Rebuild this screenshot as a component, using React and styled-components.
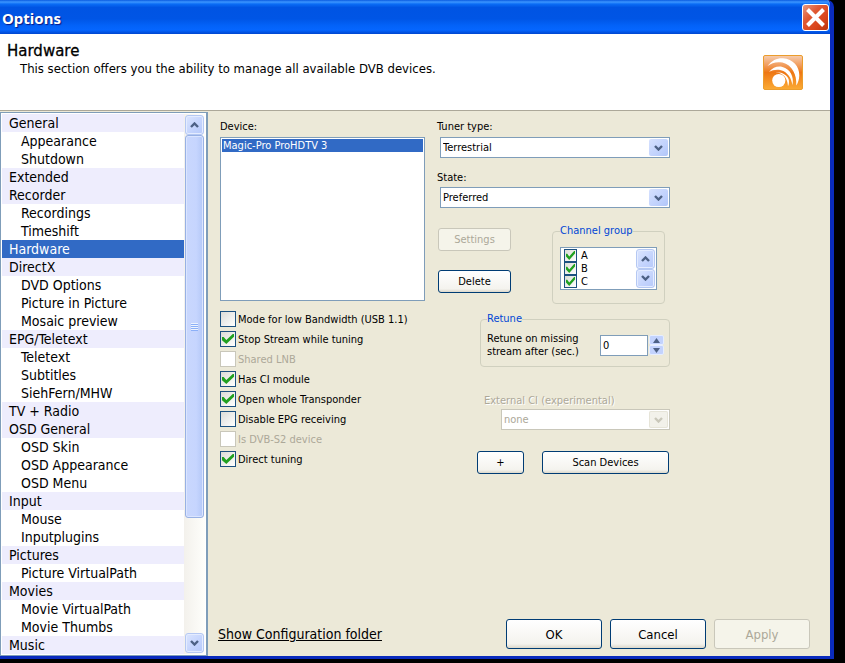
import React from "react";
import styled, { createGlobalStyle, css } from "styled-components";

const COLORS = {
  FACE: "#ece9d8",
  WHITE: "#ffffff",
  BLACK: "#000000",
  SELECTED: "#316ac5",
  GROUP_ROW: "#eeedfd",
  FIELD_BORDER: "#7f9db9",
  BUTTON_BORDER: "#003c74",
  CHECK_BORDER: "#1c5180",
  DISABLED_BORDER: "#c9c7ba",
  DISABLED_TEXT: "#aca899",
  GROUP_BORDER: "#d0d0bf",
  LEGEND: "#0046d5",
  GLYPH: "#4d6185",
  GREEN: "#21a121",
};

const FONT = `"DejaVu Sans Condensed", "Noto Sans", sans-serif`;

const SECTIONS = [
  { name: "General", children: ["Appearance", "Shutdown"] },
  { name: "Extended", children: [] },
  { name: "Recorder", children: ["Recordings", "Timeshift"] },
  { name: "Hardware", children: [] },
  {
    name: "DirectX",
    children: ["DVD Options", "Picture in Picture", "Mosaic preview"],
  },
  { name: "EPG/Teletext", children: ["Teletext", "Subtitles", "SiehFern/MHW"] },
  { name: "TV + Radio", children: [] },
  { name: "OSD General", children: ["OSD Skin", "OSD Appearance", "OSD Menu"] },
  { name: "Input", children: ["Mouse", "Inputplugins"] },
  { name: "Pictures", children: ["Picture VirtualPath"] },
  { name: "Movies", children: ["Movie VirtualPath", "Movie Thumbs"] },
  { name: "Music", children: [] },
];

const DEVICE_FLAGS = [
  { label: "Mode for low Bandwidth (USB 1.1)", checked: false },
  { label: "Stop Stream while tuning", checked: true },
  { label: "Shared LNB", checked: false, disabled: true },
  { label: "Has CI module", checked: true },
  { label: "Open whole Transponder", checked: true },
  { label: "Disable EPG receiving", checked: false },
  { label: "Is DVB-S2 device", checked: false, disabled: true },
  { label: "Direct tuning", checked: true },
];

const Chevron = ({ up, color = COLORS.GLYPH }) => (
  <svg width="9" height="6" viewBox="0 0 9 6" aria-hidden="true">
    <path
      d={up ? "M1 5 L4.5 1.5 L8 5" : "M1 1 L4.5 4.5 L8 1"}
      fill="none"
      stroke={color}
      strokeWidth="2.4"
    />
  </svg>
);

const SmallArrow = ({ up }) => (
  <svg width="7" height="5" viewBox="0 0 7 5" aria-hidden="true">
    <path d={up ? "M0 5 L3.5 0 L7 5 Z" : "M0 0 L3.5 5 L7 0 Z"} fill={COLORS.GLYPH} />
  </svg>
);

const Logo = () => (
  <svg width="40" height="35" viewBox="0 0 40 35" role="img" aria-label="DVB">
    <defs>
      <linearGradient id="logoFill" x1="0" y1="0" x2="0" y2="1">
        <stop offset="0" stopColor="#f6cdb0" />
        <stop offset="0.3" stopColor="#f19a58" />
        <stop offset="0.5" stopColor="#ee7714" />
        <stop offset="1" stopColor="#fbab34" />
      </linearGradient>
    </defs>
    <rect
      x="0.5"
      y="0.5"
      width="39"
      height="34"
      rx="1.5"
      fill="url(#logoFill)"
      stroke="#eb9d2c"
    />
    <circle cx="15.8" cy="25.5" r="6.6" fill="#fff" />
    <path
      d="M4.5 11 C9 5 14.5 2.8 20 3.2 C30 4 36.6 11.5 36.3 20.5 C36.2 24.5 35 28 33.2 30.5 C34.2 20 29 10 19.5 7.6 C14 6.4 9 7.5 4.5 11 Z"
      fill="#fff"
    />
    <path
      d="M6 17 C10 12.4 14.5 10.8 19.5 12 C27 14 31.4 21.5 29.4 30.3 C28.6 23 24.5 17 18 15.2 C13.5 14.2 9.5 15 6 17 Z"
      fill="#fff"
    />
    <path
      d="M12.5 17.2 C19 16.6 24.5 20 25.7 24.5 C26.3 27 26 29.2 25 31.2 C24.6 25.5 22.5 21 18.5 18.9 C16.5 17.9 14.5 17.3 12.5 17.2 Z"
      fill="#fff"
    />
  </svg>
);

const Dropdown = ({ id, value, disabled }) => (
  <SelectBox>
    <Select id={id} defaultValue={value} disabled={disabled}>
      <option>{value}</option>
    </Select>
    <SelectArrow $disabled={disabled}>
      <Chevron color={disabled ? "#c9c7ba" : COLORS.GLYPH} />
    </SelectArrow>
  </SelectBox>
);

const Sidebar = () => (
  <SidebarFrame>
    <SectionList aria-label="Sections">
      {SECTIONS.map((section) => (
        <React.Fragment key={section.name}>
          <SectionLink href="#" $group $active={section.name === "Hardware"}>
            {section.name}
          </SectionLink>
          {section.children.map((child) => (
            <SectionLink href="#" key={child}>
              {child}
            </SectionLink>
          ))}
        </React.Fragment>
      ))}
    </SectionList>
    <ScrollBar>
      <ScrollButton aria-label="Scroll up">
        <Chevron up />
      </ScrollButton>
      <ScrollTrack>
        <ScrollThumb>
          <Grip />
        </ScrollThumb>
      </ScrollTrack>
      <ScrollButton aria-label="Scroll down">
        <Chevron />
      </ScrollButton>
    </ScrollBar>
  </SidebarFrame>
);

const App = () => {
  return (
    <>
      <GlobalStyle />
      <Window>
        <TitleBar>
          <WindowTitle>Options</WindowTitle>
          <CloseButton aria-label="Close">
            <svg width="19" height="19" viewBox="0 0 19 19" aria-hidden="true">
              <path d="M1.5 1.5 L17.5 17.5 M17.5 1.5 L1.5 17.5" stroke="#fff" strokeWidth="4" />
            </svg>
          </CloseButton>
        </TitleBar>

        <Header>
          <div>
            <HeaderTitle>Hardware</HeaderTitle>
            <HeaderText>
              This section offers you the ability to manage all available DVB devices.
            </HeaderText>
          </div>
          <Logo />
        </Header>

        <Body>
          <Sidebar />
          <Panel>
            <Columns>
              <Column>
                <Label as="span" id="device-label">
                  Device:
                </Label>
                <DeviceList role="listbox" aria-labelledby="device-label">
                  <DeviceItem role="option" aria-selected="true">
                    Magic-Pro ProHDTV 3
                  </DeviceItem>
                </DeviceList>
                <Flags>
                  {DEVICE_FLAGS.map((flag) => (
                    <Flag key={flag.label} $disabled={flag.disabled}>
                      <CheckBox
                        type="checkbox"
                        defaultChecked={flag.checked}
                        disabled={flag.disabled}
                      />
                      {flag.label}
                    </Flag>
                  ))}
                </Flags>
              </Column>

              <Column>
                <Label htmlFor="tuner">Tuner type:</Label>
                <Indent>
                  <Dropdown id="tuner" value="Terrestrial" />
                </Indent>
                <StateLabel htmlFor="state">State:</StateLabel>
                <Indent>
                  <Dropdown id="state" value="Preferred" />
                </Indent>

                <ActionRow>
                  <ActionButtons>
                    <Button disabled>Settings</Button>
                    <Button>Delete</Button>
                  </ActionButtons>
                  <ChannelGroup>
                    <Legend>Channel group</Legend>
                    <ChannelBox>
                      <div>
                        {["A", "B", "C"].map((channel) => (
                          <Channel key={channel}>
                            <CheckBox type="checkbox" $small defaultChecked />
                            {channel}
                          </Channel>
                        ))}
                      </div>
                      <ChannelScroll>
                        <ScrollButton aria-label="Scroll channels up">
                          <Chevron up />
                        </ScrollButton>
                        <ScrollButton aria-label="Scroll channels down">
                          <Chevron />
                        </ScrollButton>
                      </ChannelScroll>
                    </ChannelBox>
                  </ChannelGroup>
                </ActionRow>

                <RetuneGroup>
                  <Legend>Retune</Legend>
                  <RetuneRow>
                    <RetuneLabel htmlFor="retune">
                      Retune on missing stream after (sec.)
                    </RetuneLabel>
                    <NumberInput id="retune" type="text" defaultValue="0" />
                    <Spinner>
                      <SpinButton aria-label="Increase">
                        <SmallArrow up />
                      </SpinButton>
                      <SpinButton aria-label="Decrease">
                        <SmallArrow />
                      </SpinButton>
                    </Spinner>
                  </RetuneRow>
                </RetuneGroup>

                <ExternalCi>
                  <ExternalLabel htmlFor="external-ci">
                    External CI (experimental)
                  </ExternalLabel>
                  <ExternalField>
                    <Dropdown id="external-ci" value="none" disabled />
                  </ExternalField>
                </ExternalCi>

                <ScanRow>
                  <Button aria-label="Add device">+</Button>
                  <Button>Scan Devices</Button>
                </ScanRow>
              </Column>
            </Columns>

            <Footer>
              <FolderLink href="#">Show Configuration folder</FolderLink>
              <FooterButtons>
                <Button $large>OK</Button>
                <Button $large>Cancel</Button>
                <Button $large disabled>
                  Apply
                </Button>
              </FooterButtons>
            </Footer>
          </Panel>
        </Body>
      </Window>
    </>
  );
};

const GlobalStyle = createGlobalStyle`
  *, *::before, *::after {
    box-sizing: border-box;
  }
  body {
    margin: 0;
    background: ${COLORS.BLACK};
    font-family: ${FONT};
    font-size: 11px;
    color: ${COLORS.BLACK};
  }
  button, input, select {
    font: inherit;
    color: inherit;
    margin: 0;
  }
`;

const Window = styled.div`
  margin-right: 11px;
  border: solid #0a2bbd;
  border-width: 0 4px 3px 0;
  border-top-right-radius: 7px;
  background: ${COLORS.FACE};
  overflow: hidden;
`;

const TitleBar = styled.div`
  display: flex;
  align-items: center;
  justify-content: space-between;
  height: 34px;
  padding: 0 1px 0 2px;
  background: linear-gradient(
    #0a5be0 0%,
    #3c96ff 6%,
    #0a6cf5 12%,
    #0054e3 22%,
    #0055e5 55%,
    #0362f8 75%,
    #0566ff 88%,
    #0046cf 100%
  );
`;

const WindowTitle = styled.h1`
  margin: 0;
  padding-top: 2px;
  font-family: "Noto Sans", sans-serif;
  font-size: 15px;
  font-weight: 700;
  color: ${COLORS.WHITE};
  text-shadow: 1px 1px 1px #0a1883;
`;

const CloseButton = styled.button`
  display: flex;
  align-items: center;
  justify-content: center;
  width: 27px;
  height: 27px;
  padding: 0;
  border: 1px solid ${COLORS.WHITE};
  border-radius: 3px;
  background: linear-gradient(135deg, #e89a80, #e05a35 35%, #d9451b 70%, #b8350f);
`;

const Header = styled.header`
  display: flex;
  align-items: center;
  justify-content: space-between;
  height: 77px;
  padding: 0 27px 0 7px;
  border-bottom: 1px solid ${COLORS.DISABLED_TEXT};
  background: ${COLORS.WHITE};
`;

const HeaderTitle = styled.h2`
  margin: 0;
  font-family: "DejaVu Sans", sans-serif;
  font-size: 15px;
  font-weight: 400;
  line-height: 17px;
  -webkit-text-stroke: 0.3px;
`;

const HeaderText = styled.p`
  margin: 0 0 24px 13px;
  font-size: 13px;
  line-height: 17px;
`;

const Body = styled.div`
  display: grid;
  grid-template-columns: 208px 1fr;
`;

const SidebarFrame = styled.div`
  display: grid;
  grid-template-columns: 1fr 21px;
  margin-top: 1px;
  padding: 1px;
  border: 1px solid ${COLORS.FIELD_BORDER};
  border-right-width: 2px;
  background: ${COLORS.WHITE};
`;

const SectionList = styled.nav`
  display: flex;
  flex-direction: column;
`;

const SectionLink = styled.a`
  height: 18px;
  padding-left: ${({ $group }) => ($group ? "7px" : "19px")};
  font-size: 14px;
  line-height: 18px;
  white-space: nowrap;
  text-decoration: none;
  color: ${({ $active }) => ($active ? COLORS.WHITE : COLORS.BLACK)};
  background: ${({ $group, $active }) => {
    if ($active) {
      return COLORS.SELECTED;
    }
    return $group ? COLORS.GROUP_ROW : COLORS.WHITE;
  }};
`;

const ScrollBar = styled.div`
  display: flex;
  flex-direction: column;
  padding: 1px;
  background: linear-gradient(90deg, #f3f1ec, #fefefb);
`;

const ScrollButton = styled.button`
  display: flex;
  align-items: center;
  justify-content: center;
  width: 19px;
  height: 20px;
  padding: 0;
  border: 1px solid #b5c8f3;
  border-radius: 3px;
  background: linear-gradient(135deg, #dbe5fe, #c3d3fd 60%, #b6c9fa);
  box-shadow: inset 0 0 0 1px #e4ecff;
`;

const ScrollTrack = styled.div`
  flex: 1;
`;

const ScrollThumb = styled.div`
  display: flex;
  align-items: center;
  justify-content: center;
  height: 77%;
  border: 1px solid #98b1e4;
  border-radius: 3px;
  background: linear-gradient(90deg, #c9d7fd, #c6d5fe 60%, #b4c8f7);
  box-shadow: inset 0 0 0 1px #dbe5ff;
`;

const Grip = styled.div`
  width: 7px;
  height: 8px;
  background: repeating-linear-gradient(#eef4fe 0 1px, #8cb0f8 1px 2px);
`;

const Panel = styled.main`
  display: flex;
  flex-direction: column;
  justify-content: space-between;
  padding: 8px 20px 7px 10px;
`;

const Columns = styled.div`
  display: grid;
  grid-template-columns: 205px 233px;
  gap: 12px;
  padding-left: 2px;
`;

const Column = styled.div`
  display: flex;
  flex-direction: column;
`;

const Label = styled.label`
  margin-bottom: 2px;
  line-height: 16px;
`;

const StateLabel = styled(Label)`
  margin-top: 12px;
  margin-bottom: 1px;
`;

const ExternalLabel = styled(Label)`
  margin-bottom: 0;
  color: ${COLORS.DISABLED_TEXT};
  text-shadow: 1px 1px 0 ${COLORS.WHITE};
`;

const DeviceList = styled.ul`
  height: 164px;
  margin: 0;
  padding: 1px;
  border: 1px solid ${COLORS.FIELD_BORDER};
  background: ${COLORS.WHITE};
  list-style: none;
`;

const DeviceItem = styled.li`
  padding-left: 1px;
  line-height: 13px;
  color: ${COLORS.WHITE};
  background: ${COLORS.SELECTED};
`;

const Flags = styled.div`
  display: flex;
  flex-direction: column;
  margin-top: 8px;
`;

const Flag = styled.label`
  display: flex;
  align-items: center;
  gap: 2px;
  height: 20px;
  white-space: nowrap;
  color: ${({ $disabled }) => ($disabled ? COLORS.DISABLED_TEXT : COLORS.BLACK)};
`;

const CheckBox = styled.input`
  appearance: none;
  flex: none;
  display: grid;
  place-items: center;
  width: ${({ $small }) => ($small ? "13px" : "16px")};
  height: ${({ $small }) => ($small ? "13px" : "16px")};
  border: 1px solid ${COLORS.CHECK_BORDER};
  background: linear-gradient(135deg, #dcdcd7, #ffffff);

  &:checked::before {
    content: "";
    width: ${({ $small }) => ($small ? "9px" : "12px")};
    height: ${({ $small }) => ($small ? "9px" : "10px")};
    background: ${COLORS.GREEN};
    clip-path: polygon(0 30%, 14% 30%, 36% 60%, 90% 0, 100% 0, 100% 28%, 36% 100%, 0 62%);
  }

  &:disabled {
    border-color: ${COLORS.DISABLED_BORDER};
    background: ${COLORS.WHITE};
  }
`;

const Indent = styled.div`
  padding-left: 3px;
`;

const SelectBox = styled.div`
  display: grid;
  align-items: center;
`;

const Select = styled.select`
  appearance: none;
  grid-area: 1 / 1;
  width: 100%;
  height: 21px;
  padding: 0 20px 0 2px;
  border: 1px solid ${COLORS.FIELD_BORDER};
  border-radius: 0;
  background: ${COLORS.WHITE};

  &:disabled {
    border-color: ${COLORS.DISABLED_BORDER};
    color: ${COLORS.DISABLED_TEXT};
    opacity: 1;
  }
`;

const SelectArrow = styled.span`
  grid-area: 1 / 1;
  justify-self: end;
  display: flex;
  align-items: center;
  justify-content: center;
  width: 19px;
  height: 17px;
  margin-right: 2px;
  border-radius: 2px;
  pointer-events: none;
  background: ${({ $disabled }) =>
    $disabled ? "#f2f1ea" : "linear-gradient(135deg, #d6e1fe, #c1d2fd 60%, #b0c5f8)"};
  box-shadow: ${({ $disabled }) => ($disabled ? "inset 0 0 0 1px #e6e4d8" : "none")};
`;

const ActionRow = styled.div`
  display: flex;
  justify-content: space-between;
  margin-top: 16px;
  padding: 0 5px 0 1px;
`;

const ActionButtons = styled.div`
  display: flex;
  flex-direction: column;
  gap: 19px;
  width: 73px;
  padding-top: 4px;
`;

const Button = styled.button`
  height: 23px;
  padding: 0;
  border: 1px solid ${COLORS.BUTTON_BORDER};
  border-radius: 3px;
  background: linear-gradient(#ffffff, #f4f3ee 85%, #dcd8cb);

  ${({ $large }) =>
    $large &&
    css`
      width: 96px;
      height: 30px;
      font-size: 13px;
    `}

  &:disabled {
    border-color: ${COLORS.DISABLED_BORDER};
    background: #f5f4ea;
    color: ${COLORS.DISABLED_TEXT};
  }
`;

const Group = styled.fieldset`
  min-width: 0;
  margin: 0;
  padding: 0 7px;
  border: 1px solid ${COLORS.GROUP_BORDER};
  border-radius: 4px;
`;

const ChannelGroup = styled(Group)`
  width: 113px;
  padding-top: 9px;
  padding-bottom: 13px;
`;

const Legend = styled.legend`
  padding: 0;
  line-height: 14px;
  color: ${COLORS.LEGEND};
`;

const ChannelBox = styled.div`
  display: flex;
  justify-content: space-between;
  height: 43px;
  padding: 1px 1px 1px 3px;
  border: 1px solid ${COLORS.FIELD_BORDER};
  background: ${COLORS.WHITE};
`;

const Channel = styled.label`
  display: flex;
  align-items: center;
  gap: 4px;
  height: 13px;
`;

const ChannelScroll = styled.div`
  display: flex;
  flex-direction: column;
`;

const RetuneGroup = styled(Group)`
  margin: 8px 0 0 43px;
  padding: 6px 5px 8px 6px;
`;

const RetuneRow = styled.div`
  display: flex;
  align-items: center;
`;

const RetuneLabel = styled.label`
  flex: 1;
  line-height: 13px;
  padding-right: 12px;
`;

const NumberInput = styled.input`
  width: 48px;
  height: 21px;
  padding: 0 2px;
  border: 1px solid ${COLORS.FIELD_BORDER};
  background: ${COLORS.WHITE};
`;

const Spinner = styled.div`
  display: flex;
  flex-direction: column;
  padding-left: 1px;
`;

const SpinButton = styled.button`
  display: flex;
  align-items: center;
  justify-content: center;
  width: 15px;
  height: 10px;
  padding: 0;
  border: 1px solid #e6eeff;
  border-radius: 2px;
  background: #c3d3fd;
`;

const ExternalCi = styled.div`
  display: flex;
  flex-direction: column;
  margin-top: 26px;
  padding-left: 47px;
`;

const ExternalField = styled.div`
  padding-left: 17px;
`;

const ScanRow = styled.div`
  display: grid;
  grid-template-columns: 47px 1fr;
  gap: 18px;
  margin-top: 21px;
  padding: 0 1px 0 40px;
`;

const Footer = styled.footer`
  display: flex;
  align-items: center;
  justify-content: space-between;
`;

const FolderLink = styled.a`
  font-size: 14px;
  color: ${COLORS.BLACK};
`;

const FooterButtons = styled.div`
  display: flex;
  gap: 8px;
`;

export default App;
